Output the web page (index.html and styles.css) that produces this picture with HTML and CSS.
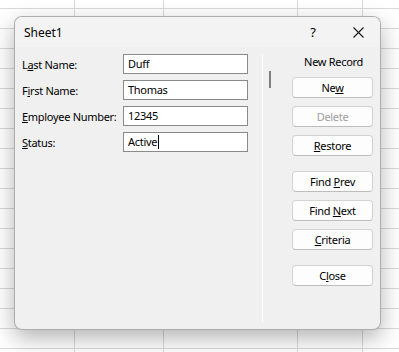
FILE: index.html
```html
<!DOCTYPE html>
<html lang="en">
<head>
    <meta charset="UTF-8">
    <meta name="viewport" content="width=device-width, initial-scale=1.0">
    <title>Sheet1</title>
    <link rel="stylesheet" href="styles.css">
</head>
<body>
    <section class="dialog">
        <header class="titlebar">
            <span class="title">Sheet1</span>
            <span class="help">?</span>
            <span class="close-x">
                <svg width="11" height="11" viewBox="0 0 11 11"><path d="M0.5 0.5 L10.5 10.5 M10.5 0.5 L0.5 10.5" stroke="#1a1a1a" stroke-width="1.1" fill="none"/></svg>
            </span>
        </header>
        <div class="dialog-body">
            <div class="fields">
                <div class="field">
                    <label>L<u>a</u>st Name:</label>
                    <div class="input">Duff</div>
                </div>
                <div class="field">
                    <label>F<u>i</u>rst Name:</label>
                    <div class="input">Thomas</div>
                </div>
                <div class="field">
                    <label><u>E</u>mployee Number:</label>
                    <div class="input">12345</div>
                </div>
                <div class="field">
                    <label><u>S</u>tatus:</label>
                    <div class="input">Active<span class="caret"></span></div>
                </div>
            </div>
            <div class="separator"></div>
            <div class="scroll">
                <div class="thumb"></div>
            </div>
            <div class="actions">
                <div class="record">New Record</div>
                <button class="btn">Ne<u>w</u></button>
                <button class="btn disabled">Delete</button>
                <button class="btn"><u>R</u>estore</button>
                <button class="btn spaced">Find <u>P</u>rev</button>
                <button class="btn">Find <u>N</u>ext</button>
                <button class="btn"><u>C</u>riteria</button>
                <button class="btn spaced">C<u>l</u>ose</button>
            </div>
        </div>
    </section>
</body>
</html>
```

FILE: styles.css
```css
body {
    margin: 0;
    padding: 16px 0 0 14px;
    height: 352px;
    box-sizing: border-box;
    overflow: hidden;
    font-family: "Noto Sans", "Open Sans", sans-serif;
    font-size: 11px;
    letter-spacing: -0.3px;
    color: #000;
    background-color: #fff;
    background-image:
        linear-gradient(#d9d9d9, #d9d9d9),
        linear-gradient(#d9d9d9, #d9d9d9),
        linear-gradient(#d9d9d9, #d9d9d9),
        linear-gradient(#d9d9d9, #d9d9d9),
        repeating-linear-gradient(to bottom, transparent 0, transparent 8px, #d9d9d9 8px, #d9d9d9 9px, transparent 9px, transparent 20px);
    background-size: 1px 100%, 1px 100%, 1px 100%, 1px 100%, 100% 100%;
    background-position: 74px 0, 163px 0, 297px 0, 362px 0, 0 0;
    background-repeat: no-repeat;
}

.dialog {
    width: 367px;
    height: 314px;
    box-sizing: border-box;
    background: #f0f0f0;
    border: 1px solid rgba(0, 0, 0, 0.28);
    border-radius: 8px;
    box-shadow: 0 8px 22px rgba(0, 0, 0, 0.3);
    display: flex;
    flex-direction: column;
    overflow: hidden;
}

.titlebar {
    height: 30px;
    background: #f3f3f3;
    display: flex;
    align-items: center;
    padding: 0 0 0 9px;
}

.title {
    flex: 1;
    font-size: 12px;
    letter-spacing: 0;
}

.help {
    width: 20px;
    text-align: center;
    font-size: 13px;
    margin-right: 24px;
}

.close-x {
    width: 22px;
    display: flex;
    justify-content: center;
    margin-right: 11px;
}

.dialog-body {
    flex: 1;
    display: flex;
    padding: 7px;
}

.fields {
    width: 226px;
    display: flex;
    flex-direction: column;
    gap: 6px;
}

.field {
    display: flex;
    align-items: center;
    height: 20px;
}

.field label {
    width: 101px;
    white-space: nowrap;
}

.input {
    width: 125px;
    height: 20px;
    box-sizing: border-box;
    background: #fff;
    border: 1px solid #8a8a8a;
    padding: 0 4px;
    line-height: 18px;
}

.caret {
    display: inline-block;
    width: 1px;
    height: 14px;
    background: #000;
    vertical-align: -3px;
    margin-left: 1px;
}

.separator {
    width: 1px;
    background: #fff;
    margin: 1px 0 0 14px;
}

.scroll {
    width: 29px;
    padding: 17px 0 0 6px;
    box-sizing: border-box;
}

.thumb {
    width: 2px;
    height: 17px;
    background: #808080;
}

.actions {
    width: 81px;
    display: flex;
    flex-direction: column;
    gap: 8px;
}

.record {
    text-align: right;
    padding-right: 10px;
    height: 16px;
    line-height: 16px;
    margin-bottom: -1px;
}

.btn {
    height: 21px;
    font-family: inherit;
    font-size: 11px;
    letter-spacing: inherit;
    color: #000;
    background: #fdfdfd;
    border: 1px solid #d3d3d3;
    border-bottom-color: #bdbdbd;
    border-radius: 4px;
    padding: 0;
}

.btn.disabled {
    color: #a0a0a0;
}

.btn.spaced {
    margin-top: 7px;
}
```
